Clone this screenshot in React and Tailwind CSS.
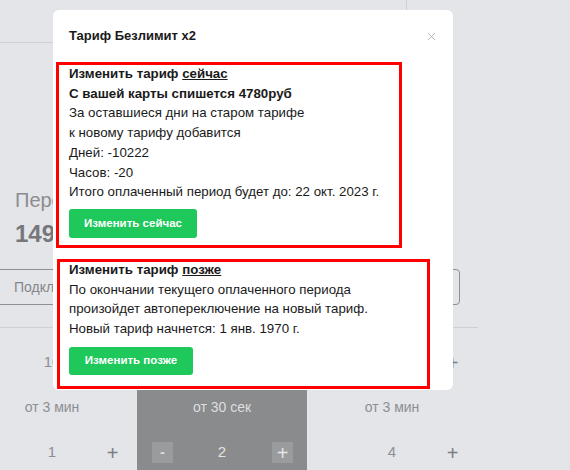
import React from 'react';
import { X } from 'lucide-react';

const Counter = ({ value, showMinus, dark }) => (
    <div className="relative h-[45px] flex items-center justify-center">
        {showMinus && (
            <span className={`absolute left-[15px] top-[12px] size-[21px] flex items-center justify-center text-[15px] font-bold ${dark ? 'bg-[#9a9b9c] text-[#dcdcdc]' : 'text-[#8d8e92]'}`}>-</span>
        )}
        <span className={`text-[15px] ${dark ? 'text-[#e4e4e4]' : 'text-[#8d8e92]'}`}>{value}</span>
        <span className={`absolute left-[135px] top-[12px] size-[21px] flex items-center justify-center text-[20px] ${dark ? 'bg-[#9a9b9c] text-[#e4e4e4]' : 'text-[#7d7e82]'}`}>+</span>
    </div>
);

const Column = ({ top, label, bottom, dark }) => (
    <div className={`w-[170px] pt-[12px] ${dark ? 'bg-[#8a8b8c]' : ''}`}>
        <Counter value={top} showMinus={dark} dark={dark} />
        <div className={`h-[45px] flex items-center justify-center text-[14px] ${dark ? 'text-[#dedede]' : 'text-[#8d8e92]'}`}>
            {label}
        </div>
        <Counter value={bottom} showMinus={dark} dark={dark} />
    </div>
);

const App = () => {
    return (
        <div
            className="relative w-[570px] h-[470px] overflow-hidden bg-[#e4e5e9]"
            style={{ fontFamily: '"Liberation Sans", Arial, sans-serif' }}
        >
            {/* page behind the dialog */}
            <div className="w-[407px] h-[43px] border-b border-r border-[#cfd0d4]"></div>
            <div className="ml-[-33px] w-[511px]">
                <div className="pl-[48px] pt-[145px]">
                    <div className="text-[20px] text-[#8b8c90] leading-[24px]">Персональный</div>
                    <div className="mt-[8px] text-[24px] font-bold text-[#76777b] leading-[28px]">1490 руб</div>
                </div>
                <div className="mx-[18px] mt-[21px] h-[36px] border border-[#8f9094] rounded-[4px] flex items-center pl-[28px] text-[14px] text-[#85868a]">
                    Подключить
                </div>
                <div className="mt-[22px] border-b border-[#cfd0d4]"></div>
                <div className="flex">
                    <Column top="10" label="от 3 мин" bottom="1" />
                    <Column top="20" label="от 30 сек" bottom="2" dark />
                    <Column top="40" label="от 3 мин" bottom="4" />
                </div>
            </div>

            {/* dialog */}
            <div className="absolute left-[53px] top-[10px] w-[400px] h-[380px] bg-white rounded-[6px] text-[#1a1a1a]">
                <div className="flex items-center justify-between h-[52px] pl-[16px] pr-[15px]">
                    <h3 className="text-[13px] font-bold">Тариф Безлимит x2</h3>
                    <X size={13} strokeWidth={1.3} className="text-[#9a9a9a]" />
                </div>

                <div className="ml-[3px] w-[346px] border-[3px] border-[#ff0000] pl-[10px] pb-[7px] text-[13.3px] leading-[19.7px]">
                    <p className="-mt-[1px] font-bold">Изменить тариф <span className="underline">сейчас</span></p>
                    <p className="font-bold">С вашей карты спишется 4780руб</p>
                    <p>За оставшиеся дни на старом тарифе</p>
                    <p>к новому тарифу добавится</p>
                    <p>Дней: -10222</p>
                    <p>Часов: -20</p>
                    <p>Итого оплаченный период будет до: 22 окт. 2023 г.</p>
                    <button className="mt-[7px] w-[128px] h-[29px] rounded-[3px] bg-[#1ec85b] text-white text-[11.5px] font-bold">
                        Изменить сейчас
                    </button>
                </div>

                <div className="ml-[4px] mt-[11px] w-[373px] border-[3px] border-[#ff0000] pl-[9px] pb-[11px] text-[13.3px] leading-[19.7px]">
                    <p className="-mt-[2px] font-bold">Изменить тариф <span className="underline">позже</span></p>
                    <p>По окончании текущего оплаченного периода</p>
                    <p>произойдет автопереключение на новый тариф.</p>
                    <p>Новый тариф начнется: 1 янв. 1970 г.</p>
                    <button className="mt-[8px] w-[124px] h-[28px] rounded-[3px] bg-[#1ec85b] text-white text-[11.5px] font-bold">
                        Изменить позже
                    </button>
                </div>
            </div>
        </div>
    );
};

export default App;
